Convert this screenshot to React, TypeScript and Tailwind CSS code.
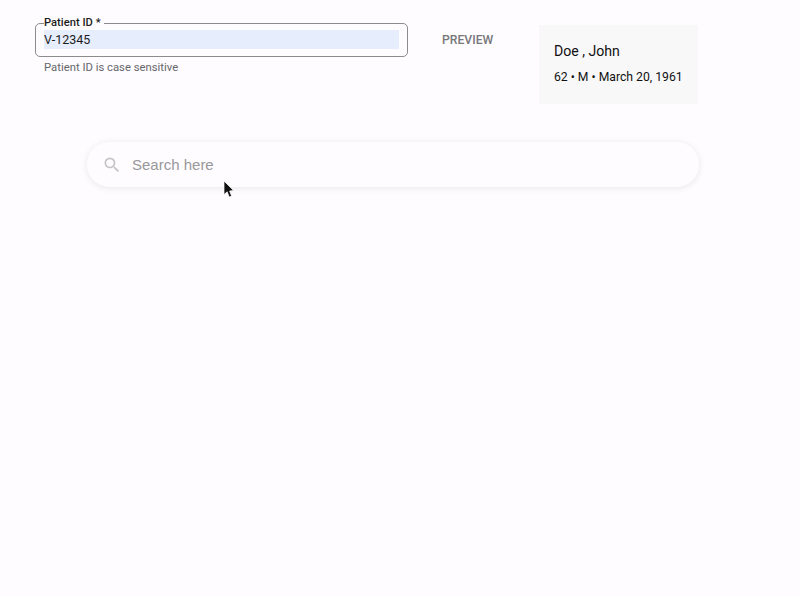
import { MdSearch } from "react-icons/md";

const PatientField = () => {
  return (
    <div className="w-[373px]">
      <fieldset className="h-[39px] border-[1.5px] border-[#8c8c8c] rounded-[5px] pl-2 pr-2">
        <legend className="ml-0 pr-[1px] text-[11.2px] leading-[10px] font-medium text-[#1c1c1c]">
          Patient ID *&nbsp;
        </legend>
        <div className="h-[19px] mt-[2px] bg-[#e6edfd] text-[12.5px] leading-[19px] text-[#1c1c1c]">
          V-12345
        </div>
      </fieldset>
      <p className="mt-[3px] pl-[9px] text-[11.3px] leading-[16px] text-[#66666a]">
        Patient ID is case sensitive
      </p>
    </div>
  );
};

const PatientCard = () => {
  return (
    <div className="w-[159px] h-[79px] bg-[#f8f8f9] pl-[15px] pt-[16px] text-[#111111]">
      <p className="text-[14.1px] leading-[20px]">Doe , John</p>
      <p className="mt-[7px] text-[12.2px] leading-[18px] whitespace-nowrap">62 • M • March 20, 1961</p>
    </div>
  );
};

export default function App() {
  return (
    <div className="relative w-[800px] h-[596px] overflow-hidden bg-[#fefcfe] font-['Roboto',sans-serif]">
      <div className="flex items-start pl-[35px] pt-[18px]">
        <PatientField />
        <button className="ml-[34px] w-[51px] mt-[14px] text-[12.2px] leading-[16px] font-medium text-[#77777a] whitespace-nowrap text-left">
          PREVIEW
        </button>
        <div className="ml-[46px] mt-[7px]">
          <PatientCard />
        </div>
      </div>

      <div className="ml-[87px] mt-[38px] w-[612px] h-[45px] rounded-[22px] bg-[#fefcfe] shadow-[0_1px_7px_rgba(0,0,0,0.09)] flex items-center pl-[15px]">
        <MdSearch size={20} className="text-[#c4c4c6]" />
        <span className="ml-[10px] pt-[1px] text-[15px] text-[#98989b] font-['Liberation_Sans',sans-serif]">Search here</span>
      </div>

      <svg className="absolute left-[223px] top-[180px]" width="12" height="19" viewBox="0 0 12 19">
        <path d="M1 1 L1 14.5 L4.2 11.8 L6.2 17 L8.6 16 L6.6 11 L10.5 10.5 Z" fill="#111111" stroke="#ffffff" strokeWidth="0.7" />
      </svg>
    </div>
  );
}
